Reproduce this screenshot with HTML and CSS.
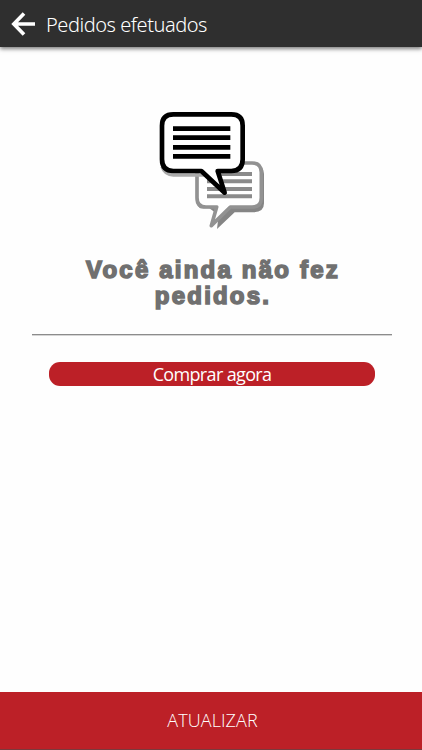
FILE: index.html
```html
<!DOCTYPE html>
<html lang="pt-BR">
<head>
    <meta charset="UTF-8">
    <meta name="viewport" content="width=device-width, initial-scale=1.0">
    <title>Pedidos efetuados</title>
    <link rel="stylesheet" href="styles.css">
</head>
<body>
    <header class="header">
        <button class="back-btn" aria-label="Voltar">
            <svg width="24" height="24" viewBox="0 0 24 24">
                <path d="M13 1.4 2.8 12 13 22.6M3 12H24" fill="none" stroke="#fff" stroke-width="3.6" />
            </svg>
        </button>
        <h1>Pedidos efetuados</h1>
    </header>

    <main class="content">
        <svg class="chat-icon" width="108" height="120" viewBox="24 30 324 360">
            <!-- back bubble -->
            <path d="M168 198H302Q342 190 342 222V310Q342 336 312 337H254L201 387 206 345 178 325H150Q138 315 138 295V225Z" fill="#858585" />
            <path d="M166 189H306Q334 189 334 217V293Q334 321 306 321H241L184 377 200 321H168Q141 321 141 293V217Q141 189 166 189Z" fill="#fff" stroke="#929292" stroke-width="11" stroke-linejoin="round" />
            <path d="M171 222H306M171 244H306M171 267H306M171 289H306" stroke="#8b8b8b" stroke-width="12" />
            <!-- front bubble -->
            <path d="M36 200Q45 225 70 225H165" fill="none" stroke="#aaa" stroke-width="10" />
            <path d="M70 43H244Q278 43 278 77V178Q278 213 244 213H203L224 278 154 213H70Q36 213 36 178V77Q36 43 70 43Z" fill="#fff" stroke="#000" stroke-width="14" stroke-linejoin="round" />
            <path d="M69 86H241M69 113H241M69 142H241M69 169H241" stroke="#000" stroke-width="14" />
        </svg>
        <h2>Você ainda não fez pedidos.</h2>
        <hr class="divider">
        <button class="buy-btn">Comprar agora</button>
    </main>

    <button class="update-btn">ATUALIZAR</button>
</body>
</html>
```

FILE: styles.css
```css
* {
    box-sizing: border-box;
}

body {
    font-family: 'Open Sans', sans-serif;
    margin: 0;
    height: 100vh;
    display: flex;
    flex-direction: column;
    background: #fefefe;
}

button {
    font-family: inherit;
    border: none;
    padding: 0;
    color: white;
    cursor: pointer;
}

.header {
    display: flex;
    align-items: center;
    gap: 11px;
    height: 47px;
    padding: 0 11px;
    background: #2f2f2f;
    color: white;
    box-shadow: 0 2px 4px rgba(0, 0, 0, 0.5);
}

.back-btn {
    display: flex;
    background: none;
}

.header h1 {
    margin: 0;
    padding-top: 2px;
    font-family: 'Noto Sans', sans-serif;
    font-size: 20px;
    font-weight: 300;
    line-height: 28px;
    letter-spacing: -0.45px;
}

.content {
    flex: 1;
    display: flex;
    flex-direction: column;
    align-items: center;
    padding: 63px 30px 0 32px;
}

.chat-icon {
    display: block;
}

.content h2 {
    width: 280px;
    margin: 27px 0 0;
    padding-left: 2px;
    font-family: 'Liberation Sans', Arial, sans-serif;
    font-size: 24px;
    font-weight: bold;
    line-height: 26px;
    letter-spacing: 2.2px;
    text-align: center;
    color: #707070;
    -webkit-text-stroke: 1.6px #707070;
}

.divider {
    width: 100%;
    height: 2px;
    margin: 25px 0 0;
    border: none;
    border-top: 1px solid #8c8c8c;
    border-bottom: 1px solid #d5d5d5;
}

.buy-btn {
    width: 326px;
    height: 24px;
    margin-top: 26px;
    border-radius: 11px;
    background: #bc2027;
    font-size: 18px;
    line-height: 24px;
    letter-spacing: -0.65px;
}

.update-btn {
    height: 58px;
    padding: 0 0 2px 3px;
    border-bottom: 1px solid #7a3a3d;
    background: #bc2027;
    font-size: 18px;
    font-weight: 300;
    letter-spacing: 0.1px;
}
```
